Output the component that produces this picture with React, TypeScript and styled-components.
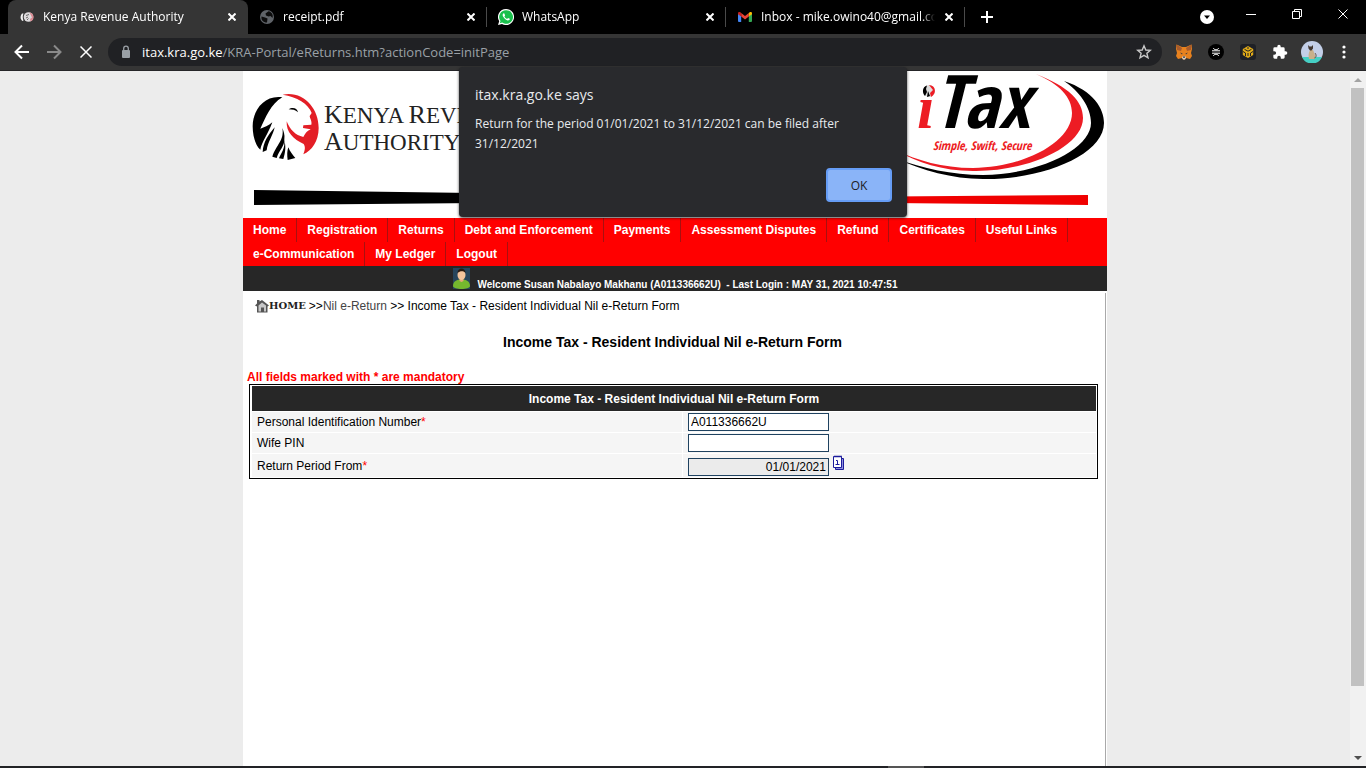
import React from 'react';
import styled, { createGlobalStyle, css } from 'styled-components';

const UI = '"Open Sans", "Noto Sans", sans-serif';
const ARIAL = '"Liberation Sans", Arial, sans-serif';

const GlobalStyle = createGlobalStyle`
  * { box-sizing: border-box; }
  body { margin: 0; font-family: ${ARIAL}; font-size: 12px; color: #000; }
  button { border: 0; padding: 0; background: none; color: inherit; font: inherit; }
  a { color: inherit; text-decoration: none; }
  svg { display: block; flex: none; }
`;

const Browser = styled.div`
  position: relative;
  display: flex;
  flex-direction: column;
  height: 100vh;
  overflow: hidden;
  background: #000;
`;

/* ---------- tab strip ---------- */

const TabStrip = styled.div`
  display: flex;
  flex: none;
  height: 34px;
  padding-left: 8px;
  background: #000;
  color: #fff;
  font-family: ${UI};
  font-size: 12px;
`;

const Tab = styled.div<{ $active?: boolean }>`
  display: flex;
  align-items: center;
  flex: 0 1 ${p => (p.$active ? 240 : 239)}px;
  min-width: 0;
  gap: 8px;
  padding: 0 10px 0 11px;
  ${p => p.$active && css`
    background: #353535;
    border-radius: 8px 8px 0 0;
  `}
`;

const TabTitle = styled.span`
  flex: 1;
  min-width: 0;
  overflow: hidden;
  white-space: nowrap;
  line-height: 20px;
  mask-image: linear-gradient(to right, #000 92%, transparent);
`;

const TabDivider = styled.span`
  flex: none;
  width: 1px;
  height: 20px;
  margin: 7px 0 0 -1px;
  background: #4a4a4a;
`;

const IconButton = styled.button<{ $w?: number }>`
  display: flex;
  align-items: center;
  justify-content: center;
  flex: none;
  width: ${p => p.$w ?? 32}px;
  color: #fff;
`;

const WindowControls = styled.div`
  display: flex;
  align-items: stretch;
  height: 28px;
  margin-left: auto;
`;

/* ---------- toolbar ---------- */

const Toolbar = styled.div`
  display: flex;
  align-items: center;
  flex: none;
  height: 37px;
  padding: 0 6px;
  background: #353535;
  border-bottom: 1px solid #252528;
`;

const Omnibox = styled.div`
  display: flex;
  align-items: center;
  flex: 1;
  min-width: 0;
  height: 28px;
  margin: 0 6px;
  padding: 0 10px 0 13px;
  border-radius: 14px;
  background: #202124;
`;

const Url = styled.div`
  flex: 1;
  min-width: 0;
  margin-left: 11px;
  overflow: hidden;
  white-space: nowrap;
  color: #9aa0a6;
  font-family: ${UI};
  font-size: 13px;
  line-height: 20px;
  b { color: #fff; font-weight: 400; }
`;

/* ---------- page ---------- */

const Viewport = styled.div`
  display: flex;
  flex: 1;
  min-height: 0;
  background: #ececec;
`;

const PageScroll = styled.div`
  display: flex;
  justify-content: center;
  flex: 1;
  min-width: 0;
`;

const Page = styled.main`
  display: flex;
  flex-direction: column;
  width: 100%;
  max-width: 864px;
  background: #fff;
`;

const Banner = styled.header`
  padding: 0 0 12px;
`;

const BannerTop = styled.div`
  display: flex;
  justify-content: space-between;
  height: 115px;
`;

const KraBrand = styled.div`
  display: flex;
  gap: 4px;
  padding: 19px 0 0 7px;
`;

const KraName = styled.div`
  padding-top: 12px;
  color: #222;
  font-family: "Liberation Serif", "Times New Roman", serif;
  font-size: 23px;
  line-height: 26px;
  white-space: nowrap;
  span { font-size: 26px; }
`;

const BannerRule = styled.div`
  margin: 4px 19px 0 11px;
`;

const Menu = styled.nav`
  display: flex;
  flex-wrap: wrap;
  background: #f00;
`;

const MenuLink = styled.a`
  padding: 0 10px;
  border-right: 1px solid #a81010;
  color: #fff;
  font-size: 12px;
  font-weight: 700;
  line-height: 24px;
`;

const Welcome = styled.div`
  display: flex;
  align-items: flex-end;
  justify-content: center;
  gap: 8px;
  height: 25px;
  padding: 1px 0;
  background: #272727;
  color: #fff;
  font-size: 10px;
  font-weight: 700;
  line-height: 11px;
  white-space: pre;
  svg { align-self: center; }
`;

const Content = styled.section`
  flex: 1;
  margin: 2px 1px 0 0;
  padding: 5px 7px 0 4px;
  border-right: 1px solid #a9a9a9;
`;

const Crumbs = styled.nav`
  display: flex;
  align-items: center;
  gap: 3px;
  padding-left: 8px;
  line-height: 16px;
  p { margin: 0; }
  p a { color: #444; }
`;

const HomeLink = styled.a`
  display: flex;
  align-items: center;
  color: #222;
  font-family: "DejaVu Serif", serif;
  font-size: 10px;
  font-weight: 700;
`;

const FormTitle = styled.h1`
  margin: 19px 0 0;
  font-size: 14px;
  font-weight: 700;
  line-height: 18px;
  text-align: center;
`;

const Mandatory = styled.p`
  margin: 19px 0 0;
  color: #f00;
  font-weight: 700;
  line-height: 14px;
`;

const FormTable = styled.table`
  width: calc(100% - 2px);
  margin-left: 2px;
  padding: 0 0 0 1px;
  border: 1px solid #000;
  border-spacing: 1px;
  table-layout: fixed;
  th {
    height: 25px;
    padding: 0;
    background: #272727;
    color: #fff;
    font-size: 12px;
  }
  td {
    padding: 0 5px;
    background: #f5f5f5;
    font-size: 12px;
    line-height: 14px;
  }
`;

const FormRow = styled.tr<{ $h: number }>`
  height: ${p => p.$h}px;
`;

const Star = styled.span`
  color: #f00;
`;

const Field = styled.input<{ $locked?: boolean }>`
  display: block;
  width: 141px;
  height: 18px;
  padding: 0 2px;
  border: 1px solid #1f4260;
  background: ${p => (p.$locked ? '#ebebeb' : '#fff')};
  color: #000;
  font: 12px ${ARIAL};
  text-align: ${p => (p.$locked ? 'right' : 'left')};
`;

const DateGroup = styled.div`
  display: flex;
  align-items: flex-start;
  gap: 4px;
  height: 21px;
  input { align-self: flex-end; }
`;

/* ---------- scroll bar, dialog, taskbar ---------- */

const ScrollBar = styled.div`
  display: flex;
  flex-direction: column;
  flex: none;
  width: 16px;
  padding: 0 2px 0 1px;
  background: #f1f1f1;
`;

const ScrollArrow = styled.button`
  display: flex;
  align-items: center;
  justify-content: center;
  flex: none;
  height: 17px;
`;

const ScrollTrack = styled.div`
  flex: 1;
`;

const ScrollThumb = styled.div`
  height: 90.5%;
  background: #c1c1c1;
`;

const DialogLayer = styled.div`
  position: absolute;
  inset: 67px 0 auto;
  display: flex;
  justify-content: center;
`;

const Dialog = styled.div`
  display: flex;
  flex-direction: column;
  width: 448px;
  padding: 17px 15px 15px 16px;
  border-radius: 4px;
  background: #292a2d;
  box-shadow: 0 1px 3px rgba(0, 0, 0, 0.7);
  color: #e8eaed;
  font-family: ${UI};
  h2 { margin: 0; font-size: 14px; font-weight: 400; line-height: 22px; }
  p { margin: 8px 0 14px; font-size: 12px; line-height: 20px; }
`;

const OkButton = styled.button`
  align-self: flex-end;
  width: 66px;
  height: 34px;
  border: 2px solid #669df6;
  border-radius: 4px;
  background: #8ab4f8;
  color: #202124;
  font-size: 12px;
`;

const Taskbar = styled.div`
  display: flex;
  flex: none;
  height: 2px;
  padding-left: 65%;
  background: #222326;
`;

const TaskbarItem = styled.span`
  width: 36px;
  background: #555;
`;

/* ---------- drawings ---------- */

const CloseGlyph = ({ s = 8, w = 2 }: { s?: number; w?: number }) => (
  <svg width={s} height={s} viewBox={`0 0 ${s} ${s}`} stroke="currentColor" strokeWidth={w} fill="none">
    <path d={`M.5 .5L${s - 0.5} ${s - 0.5}M${s - 0.5} .5L.5 ${s - 0.5}`} />
  </svg>
);

const KraFavicon = () => (
  <svg width="16" height="16" viewBox="0 0 16 16">
    <path d="M3 4.500C1 7 1 10 3.500 12L4.500 11.500C3.500 9 3.500 7 4.500 4.500Z" fill="#f2f2f2" />
    <circle cx="9.500" cy="8" r="4.800" fill="#dedbdd" />
    <path d="M10.500 3.500C15.500 4 16 11.500 11.500 12.500L11 10L13 8.500Z" fill="#d98a92" />
    <path d="M7 6.500L10 5.500M7 9L9 8M8 11L9.500 9.500" stroke="#666" />
  </svg>
);

const Globe = () => (
  <svg width="16" height="16" viewBox="0 0 16 16">
    <circle cx="8" cy="8" r="7" fill="#5f6368" />
    <path d="M2.500 7.500L6 8.500L8.500 9.500L8 13.500C4 13.500 2 11 2.500 7.500ZM9.500 2.300L6.500 4.500L7 6.500L9.500 7.500L11.500 7L13.500 9C14.500 6 13 3 9.500 2.300Z" fill="#0c0c0c" />
  </svg>
);

const WhatsApp = () => (
  <svg width="16" height="16" viewBox="0 0 16 16">
    <path d="M8 0A8 8 0 0 0 1.200 12.200L0 16L4 14.900A8 8 0 1 0 8 0Z" fill="#fff" />
    <path d="M8 1.200A6.800 6.800 0 0 0 2.500 12L1.800 14.200L4.200 13.500A6.800 6.800 0 1 0 8 1.200Z" fill="#19c04c" />
    <path d="M5.600 4.300C4.300 5 4.400 6.700 5.400 8.100C6.600 9.900 8 11.200 9.700 11.500C10.900 11.600 11.900 10.800 11.800 9.800L10 8.900L9.100 9.900C7.800 9.400 6.900 8.500 6.400 7.400L7.100 6.500L6.400 4.400Z" fill="#fff" />
  </svg>
);

const Gmail = () => (
  <svg width="16" height="16" viewBox="0 0 16 16">
    <path d="M1 4.500L4.200 7V13H2A1 1 0 0 1 1 12Z" fill="#4285f4" />
    <path d="M15 4.500L11.800 7V13H14A1 1 0 0 0 15 12Z" fill="#34a853" />
    <path d="M4.200 4L8 6.900L11.800 4V7.600L8 10.500L4.200 7.600Z" fill="#ea4335" />
    <path d="M1 4.500C1 2.800 2.700 2.600 3.600 3.400L4.200 4V7.600L1 5.200Z" fill="#c5221f" />
    <path d="M15 4.500C15 2.800 13.300 2.600 12.400 3.400L11.800 4V7.600L15 5.200Z" fill="#fbbc04" />
  </svg>
);

const Arrow = ({ flip }: { flip?: boolean }) => (
  <svg width="16" height="16" viewBox="0 0 16 16" fill="none" stroke={flip ? '#8a8a8a' : '#fff'} strokeWidth="2">
    <path d={flip ? 'M1 8H14M8 1.500L14.500 8L8 14.500' : 'M15 8H2M8 1.500L1.500 8L8 14.500'} />
  </svg>
);

const Lock = () => (
  <svg width="10" height="14" viewBox="0 0 10 14">
    <rect x="1" y="5" width="8" height="8" rx="1" fill="#9aa0a6" />
    <path d="M2.700 5V3.500A2.300 2.300 0 0 1 7.300 3.500V5" fill="none" stroke="#9aa0a6" strokeWidth="1.300" />
  </svg>
);

const Bookmark = () => (
  <svg width="16" height="16" viewBox="0 0 16 16" fill="none" stroke="#c8c8c8" strokeWidth="1.400">
    <path d="M8 1.800L9.800 6L14.300 6.300L10.900 9.300L12 13.800L8 11.400L4 13.800L5.100 9.300L1.700 6.300L6.200 6Z" />
  </svg>
);

const Fox = () => (
  <svg width="18" height="16" viewBox="0 0 18 16">
    <path d="M1.500 .5L7 3H11L16.500 .5L17 5L16 9L17 12L15 15L11 14L10 15.500H8L7 14L3 15L1 12L2 9L1 5Z" fill="#e8821e" />
    <path d="M1.500 .5L7 4L6 7L2 6ZM16.500 .5L11 4L12 7L16 6Z" fill="#a85c2c" />
    <path d="M7 13.500L8 12H10L11 13.500L10 15.500H8Z" fill="#d8d0c8" />
    <path d="M5 8.500L7.500 9.500L7 10.500ZM13 8.500L10.500 9.500L11 10.500Z" fill="#233447" />
    <path d="M8 12.500H10L9.800 13.800H8.200Z" fill="#222" />
  </svg>
);

const BlackCoin = () => (
  <svg width="16" height="16" viewBox="0 0 16 16">
    <circle cx="8" cy="8" r="8" fill="#000" />
    <path d="M5.500 4C5.500 6.300 10.500 6.300 10.500 4M5.500 12C5.500 9.700 10.500 9.700 10.500 12M4 6.800H12M4 9.200H12" stroke="#fff" strokeWidth="1" fill="none" />
  </svg>
);

const YellowCube = () => (
  <svg width="16" height="16" viewBox="0 0 16 16">
    <rect width="16" height="16" rx="3" fill="#1e2026" />
    <path d="M8 2L13.200 5V11L8 14L2.800 11V5Z" fill="#e0aa18" />
    <path d="M4.500 5.300L8 7.200L11.500 5.300M8 9V12M3 7.500L5.500 9V12M13 7.500L10.500 9V12M8 3V5" stroke="#1e2026" strokeWidth="1" fill="none" />
  </svg>
);

const Puzzle = () => (
  <svg width="16" height="16" viewBox="0 0 24 24" fill="#fff">
    <path d="M20.500 11H19V7a2 2 0 0 0-2-2h-4V3.500a2.500 2.500 0 0 0-5 0V5H4a2 2 0 0 0-2 2v3.800h1.500a2.700 2.700 0 0 1 0 5.400H2V20a2 2 0 0 0 2 2h3.800v-1.500a2.700 2.700 0 0 1 5.400 0V22H17a2 2 0 0 0 2-2v-4h1.500a2.500 2.500 0 0 0 0-5z" />
  </svg>
);

const Avatar = () => (
  <svg width="22" height="22" viewBox="0 0 22 22">
    <circle cx="11" cy="11" r="11" fill="#c3cfe8" />
    <path d="M1 16H21A11 11 0 0 1 1 16Z" fill="#45cfc4" />
    <path d="M9 9C7 13 7.500 16 8 18H14C14.500 14 13 11 12 9Z" fill="#c8b08a" />
    <path d="M7 4L8.500 5.500H10.500L12 4V7.500L10.500 9.500H9L7.500 7.500Z" fill="#41362f" />
    <path d="M13.500 17C16 16 15 13 14 12" stroke="#5c4a3a" fill="none" />
  </svg>
);

const LionLogo = () => (
  <svg width="70" height="72" viewBox="30 66 210 216">
    <path d="M127 88C72 80 38 128 38 175C38 207 48 234 61 245C65 222 82 203 97 163C86 174 72 178 61 182C76 150 92 108 127 88Z" />
    <path d="M104 178C84 202 70 222 68 252L80 247C83 222 100 200 104 178Z" />
    <path d="M127 180C134 218 108 230 97 266L110 270C118 246 134 235 133 214C135 200 131 190 127 180Z" />
    <path d="M133 216C136 240 124 255 117 271L130 273C135 255 139 240 133 216Z" />
    <path d="M145 238C149 250 159 262 166 270L143 276C141 262 141 250 145 238Z" />
    <path d="M146 124C156 116 172 119 174 133C166 125 157 125 146 124Z" />
    <path fill="#e31e26" d="M128 80C190 68 236 120 236 180C236 220 215 248 190 259C196 244 196 236 191 228C160 214 138 192 140 160C150 185 166 202 190 207C197 194 202 189 212 184L189 180L190 172L214 170C217 160 209 150 209 144L215 135C206 108 170 86 128 80Z" />
  </svg>
);

const ITaxLogo = () => (
  <svg width="260" height="115" viewBox="0 0 260 115" role="img" aria-label="iTax">
    <path fill="#ed1c24" d="M189 3C222 16 236 30 236 47C236 76 180 101 126 100C95 100 70 91 50 80C70 89 95 97 126 97C180 96 225 70 225 42C225 26 212 13 189 3Z" />
    <path d="M217 10C247 20 257 38 257 52C257 84 195 109 136 108C105 108 75 99 50 88C75 97 105 104 136 104C195 103 244 77 244 52C244 36 232 20 217 10Z" />
    <text x="70" y="57" fill="#ed1c24" fontFamily="Liberation Serif" fontSize="62" fontWeight="700" fontStyle="italic">i</text>
    <circle cx="82" cy="20" r="8" fill="#fff" />
    <circle cx="82" cy="20" r="6" fill="#ddd" />
    <path d="M80 14.500C75 16 75 22 78 25L80 21L79 18ZM81 20L83 25L80 26Z" />
    <path d="M82 14C89 14 90 23 84 26L83 22L86 19Z" fill="#ed1c24" />
    <text x="87" y="57" fontFamily="Liberation Sans Narrow, Open Sans Condensed, Open Sans" fontSize="74" fontWeight="700" fontStyle="italic">Tax</text>
    <text x="86" y="79" fill="#ed1c24" fontFamily="Open Sans Condensed, Liberation Sans" fontSize="12" fontStyle="italic">Simple, Swift, Secure</text>
  </svg>
);

const Person = () => (
  <svg width="17" height="21" viewBox="0 0 17 21">
    <rect width="17" height="21" fill="#27455c" />
    <path d="M0 18C0 13 4 11.500 8.500 11.500S17 13 17 18C17 22 0 22 0 18Z" fill="#76b82e" />
    <path d="M6.500 10H10.500V13L8.500 14L6.500 13Z" fill="#e2a878" />
    <ellipse cx="8.500" cy="7" rx="4" ry="5" fill="#f3c49c" />
    <path d="M4.500 5C4.500 -1 12.500 -1 12.500 5C11 2.500 7 2.500 4.500 5Z" fill="#2a1a10" />
  </svg>
);

const House = () => (
  <svg width="14" height="14" viewBox="0 0 14 14">
    <path d="M0 6.500L2 4.500V1H4.500V2.500L7 1L14 6.500L12.500 7.500V13.500H2V7.500Z" fill="#555" />
    <path d="M3.500 6.500L7 3.500L11 6.500V12.500H9V8.500H6V12.500H3.500Z" fill="#c8c8c8" />
  </svg>
);

const Calendar = () => (
  <svg width="12" height="16" viewBox="0 0 12 16">
    <path d="M2.500 3.500H10.500V14.500H2.500Z" fill="#8f8fdc" stroke="#1c1c9c" />
    <path d="M.5 1.500H8.500V12.500H.5Z" fill="#fff" stroke="#1c1c9c" />
    <path d="M2 .5V2.500M4 .5V2.500M6 .5V2.500M8 .5V2.500" stroke="#1c1c9c" />
    <path d="M3 5.500H4.500V9.500M2.500 9.500H6.500" stroke="#1c1c9c" fill="none" />
  </svg>
);

const menu = ['Home', 'Registration', 'Returns', 'Debt and Enforcement', 'Payments', 'Assessment Disputes',
  'Refund', 'Certificates', 'Useful Links', 'e-Communication', 'My Ledger', 'Logout'];

const tabs = [
  { title: 'Kenya Revenue Authority', icon: <KraFavicon />, active: true },
  { title: 'receipt.pdf', icon: <Globe /> },
  { title: 'WhatsApp', icon: <WhatsApp /> },
  { title: 'Inbox - mike.owino40@gmail.com', icon: <Gmail /> },
];

export default function App() {
  return (
    <Browser>
      <GlobalStyle />
      <TabStrip>
        {tabs.map(t => (
          <React.Fragment key={t.title}>
            <Tab $active={t.active}>
              {t.icon}
              <TabTitle>{t.title}</TabTitle>
              <IconButton $w={12} aria-label={`Close ${t.title}`}><CloseGlyph /></IconButton>
            </Tab>
            {!t.active && <TabDivider />}
          </React.Fragment>
        ))}
        <IconButton $w={44} aria-label="New tab">
          <svg width="12" height="12" viewBox="0 0 12 12" stroke="#fff" strokeWidth="2"><path d="M6 0V12M0 6H12" /></svg>
        </IconButton>
        <WindowControls>
          <IconButton $w={42} aria-label="Search tabs">
            <svg width="14" height="20" viewBox="0 0 14 20">
              <circle cx="7" cy="13" r="7" fill="#fff" />
              <path d="M4 11.500H10L7 15Z" fill="#000" />
            </svg>
          </IconButton>
          <IconButton $w={46} aria-label="Minimize">
            <svg width="10" height="10" viewBox="0 0 10 10"><path d="M0 5.500H10" stroke="#fff" /></svg>
          </IconButton>
          <IconButton $w={46} aria-label="Restore">
            <svg width="10" height="10" viewBox="0 0 10 10" fill="none" stroke="#fff"><path d="M.5 2.500H7.500V9.500H.5ZM2.500 2.500V.5H9.500V7.500H7.500" /></svg>
          </IconButton>
          <IconButton $w={46} aria-label="Close window"><CloseGlyph s={10} w={1} /></IconButton>
        </WindowControls>
      </TabStrip>

      <Toolbar>
        <IconButton aria-label="Back"><Arrow /></IconButton>
        <IconButton aria-label="Forward"><Arrow flip /></IconButton>
        <IconButton aria-label="Stop loading"><CloseGlyph s={12} w={1.5} /></IconButton>
        <Omnibox>
          <Lock />
          <Url><b>itax.kra.go.ke</b>/KRA-Portal/eReturns.htm?actionCode=initPage</Url>
          <IconButton $w={16} aria-label="Bookmark"><Bookmark /></IconButton>
        </Omnibox>
        <IconButton aria-label="Wallet"><Fox /></IconButton>
        <IconButton aria-label="Coin extension"><BlackCoin /></IconButton>
        <IconButton aria-label="Chain wallet"><YellowCube /></IconButton>
        <IconButton aria-label="Extensions"><Puzzle /></IconButton>
        <IconButton aria-label="Profile"><Avatar /></IconButton>
        <IconButton aria-label="Menu">
          <svg width="4" height="14" viewBox="0 0 4 14" fill="#fff"><circle cx="2" cy="2" r="1.600" /><circle cx="2" cy="7" r="1.600" /><circle cx="2" cy="12" r="1.600" /></svg>
        </IconButton>
      </Toolbar>

      <Viewport>
        <PageScroll>
          <Page>
            <Banner>
              <BannerTop>
                <KraBrand>
                  <LionLogo />
                  <KraName>
                    <span>K</span>ENYA <span>R</span>EVENUE<br />
                    <span>A</span>UTHORITY
                  </KraName>
                </KraBrand>
                <ITaxLogo />
              </BannerTop>
              <BannerRule>
                <svg width="100%" height="16" viewBox="0 0 834 16" preserveAspectRatio="none">
                  <path d="M0 0L440 6V11L0 15Z" />
                  <path d="M440 8L834 5V15L440 11Z" fill="#f00000" />
                </svg>
              </BannerRule>
            </Banner>

            <Menu>
              {menu.map(m => <MenuLink key={m} href="#">{m}</MenuLink>)}
            </Menu>

            <Welcome>
              <Person />
              <span>Welcome Susan Nabalayo Makhanu (A011336662U)  - Last Login : MAY 31, 2021 10:47:51</span>
            </Welcome>

            <Content>
              <Crumbs>
                <HomeLink href="#"><House />HOME</HomeLink>
                <p>&gt;&gt;<a href="#">Nil e-Return</a> &gt;&gt; Income Tax - Resident Individual Nil e-Return Form</p>
              </Crumbs>
              <FormTitle>Income Tax - Resident Individual Nil e-Return Form</FormTitle>
              <Mandatory>All fields marked with * are mandatory</Mandatory>
              <FormTable>
                <colgroup><col style={{ width: '51%' }} /><col /></colgroup>
                <thead>
                  <tr><th colSpan={2}>Income Tax - Resident Individual Nil e-Return Form</th></tr>
                </thead>
                <tbody>
                  <FormRow $h={20}>
                    <td><label htmlFor="pin">Personal Identification Number<Star>*</Star></label></td>
                    <td><Field id="pin" defaultValue="A011336662U" /></td>
                  </FormRow>
                  <FormRow $h={20}>
                    <td><label htmlFor="wife">Wife PIN</label></td>
                    <td><Field id="wife" /></td>
                  </FormRow>
                  <FormRow $h={23}>
                    <td><label htmlFor="from">Return Period From<Star>*</Star></label></td>
                    <td>
                      <DateGroup>
                        <Field id="from" $locked readOnly defaultValue="01/01/2021" />
                        <button aria-label="Pick a date"><Calendar /></button>
                      </DateGroup>
                    </td>
                  </FormRow>
                </tbody>
              </FormTable>
            </Content>
          </Page>
        </PageScroll>
        <ScrollBar>
          <ScrollArrow aria-label="Scroll up">
            <svg width="8" height="4" viewBox="0 0 8 4"><path d="M0 4L4 0L8 4Z" fill="#a3a3a3" /></svg>
          </ScrollArrow>
          <ScrollTrack><ScrollThumb /></ScrollTrack>
          <ScrollArrow aria-label="Scroll down">
            <svg width="8" height="4" viewBox="0 0 8 4"><path d="M0 0L4 4L8 0Z" fill="#505050" /></svg>
          </ScrollArrow>
        </ScrollBar>
      </Viewport>
      <Taskbar><TaskbarItem /></Taskbar>

      <DialogLayer>
        <Dialog role="alertdialog" aria-labelledby="dialog-title">
          <h2 id="dialog-title">itax.kra.go.ke says</h2>
          <p>Return for the period 01/01/2021 to 31/12/2021 can be filed after 31/12/2021</p>
          <OkButton>OK</OkButton>
        </Dialog>
      </DialogLayer>
    </Browser>
  );
}
